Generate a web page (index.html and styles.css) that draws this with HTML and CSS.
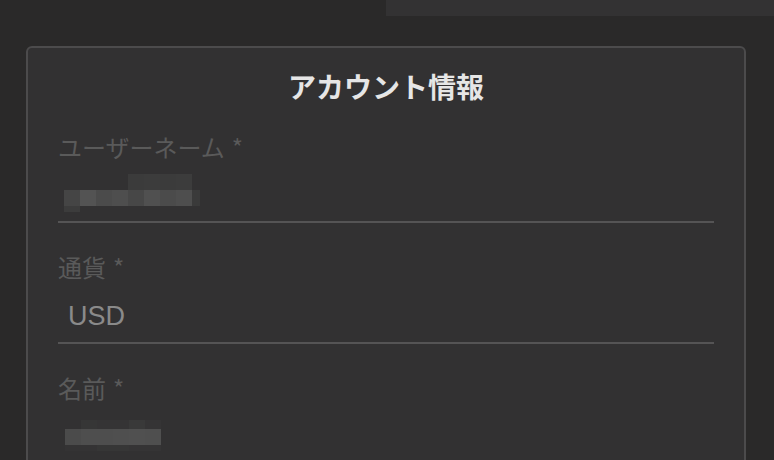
FILE: index.html
```html
<!DOCTYPE html>
<html lang="ja">
<head>
<meta charset="utf-8">
<title>アカウント情報</title>
<link rel="stylesheet" href="styles.css">
</head>
<body>
<div class="topbar"></div>
<section class="card">
  <h1 class="title">アカウント情報</h1>
  <div class="field">
    <label class="label">ユーザーネーム<span class="req">*</span></label>
    <div class="input">
      <div class="redact redact-user">
        <div class="row row-top">
          <span class="px c3b"></span><span class="px c3c"></span><span class="px c3b"></span><span class="px c3c"></span>
        </div>
        <div class="row">
          <span class="px c45"></span><span class="px c53"></span><span class="px c4b"></span><span class="px c4e"></span><span class="px c47"></span><span class="px c50"></span><span class="px c4b"></span><span class="px c4e"></span><span class="px half c3a"></span>
        </div>
        <div class="row row-bottom">
          <span class="px c3c"></span>
        </div>
      </div>
    </div>
  </div>
  <div class="field">
    <label class="label">通貨<span class="req">*</span></label>
    <div class="input"><span class="value">USD</span></div>
  </div>
  <div class="field">
    <label class="label">名前<span class="req">*</span></label>
    <div class="input">
      <div class="redact redact-name">
        <div class="row row-thin">
          <span class="px ghost"></span><span class="px c36"></span><span class="px c35"></span><span class="px c35"></span><span class="px c39"></span><span class="px c35"></span>
        </div>
        <div class="row">
          <span class="px c4b"></span><span class="px c4e"></span><span class="px c4e"></span><span class="px c4f"></span><span class="px c50"></span><span class="px c4f"></span>
        </div>
        <div class="row row-bottom">
          <span class="px c34"></span><span class="px c34"></span><span class="px c36"></span><span class="px c36"></span><span class="px c35"></span><span class="px c35"></span>
        </div>
      </div>
    </div>
  </div>
</section>
</body>
</html>
```
FILE: styles.css
```css
html, body {
  margin: 0;
  padding: 0;
  height: 460px;
  overflow: hidden;
  background: #2a2929;
  font-family: "Noto Sans CJK JP", "Noto Sans", sans-serif;
}

.topbar {
  margin-left: 386px;
  height: 16px;
  background: #333233;
}

.card {
  margin: 30px 0 0 26px;
  width: 720px;
  box-sizing: border-box;
  border: 2px solid #4c4b4c;
  border-radius: 6px;
  background: #323132;
  padding: 18px 30px 40px 30px;
}

.title {
  margin: 0;
  text-align: center;
  font-size: 28px;
  line-height: 40px;
  font-weight: 700;
  color: #e6e6e6;
}

.field {
  margin-top: 25px;
}
.field + .field {
  margin-top: 28px;
}

.label {
  display: block;
  font-size: 24px;
  line-height: 32px;
  color: #5a5a5a;
}

.req {
  margin-left: 7px;
}

.input {
  margin-top: 12px;
  height: 40px;
  padding: 0 0 7px 10px;
  border-bottom: 2px solid #555455;
}

.value {
  display: block;
  padding-top: 2px;
  font-family: "Liberation Sans", Arial, sans-serif;
  font-size: 27px;
  line-height: 38px;
  color: #8a8a8a;
}

.redact {
  display: flex;
  flex-direction: column;
  margin-left: -4px;
}
.redact-user { margin-top: -1px; }
.redact-name { padding-top: 4px; margin-left: -3px; }

.row { display: flex; height: 16px; }
.row-top { padding-left: 64px; }
.row-thin { height: 9px; }
.row-bottom { height: 6px; }

.px { width: 16px; height: 100%; flex: none; }
.px.half { width: 8px; }
.px.ghost { background: transparent; }

.c34 { background: #343334; }
.c35 { background: #353435; }
.c36 { background: #363636; }
.c39 { background: #393939; }
.c3a { background: #3a3a3a; }
.c3b { background: #3b3b3b; }
.c3c { background: #3c3c3c; }
.c45 { background: #454545; }
.c47 { background: #474747; }
.c4b { background: #4b4b4b; }
.c4e { background: #4e4e4e; }
.c4f { background: #4f4f4f; }
.c50 { background: #505050; }
.c53 { background: #535353; }
```
